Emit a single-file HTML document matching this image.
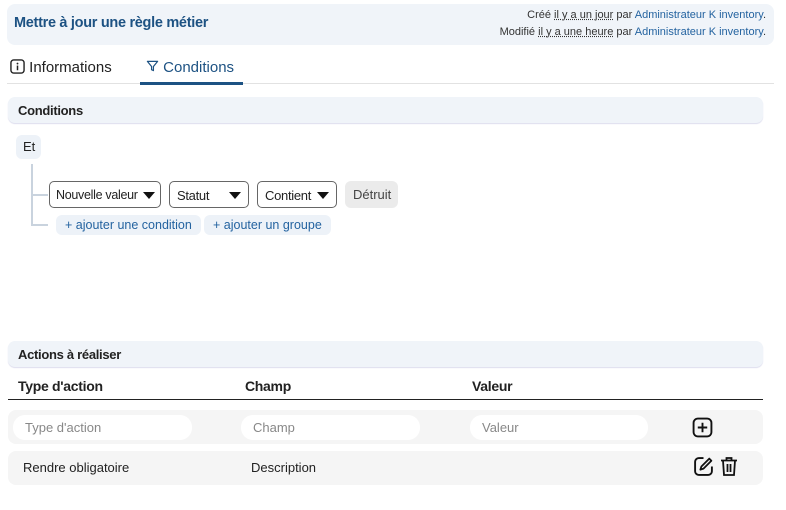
<!DOCTYPE html>
<html><head><meta charset="utf-8"><style>
*{box-sizing:border-box;margin:0;padding:0}
body{width:786px;height:510px;background:#fff;font-family:"Liberation Sans",sans-serif;color:#222;position:relative;overflow:hidden}
.a{position:absolute}
.hdr{left:7px;top:4px;width:767px;height:41px;background:#f0f4f9;border-radius:8px}
.title{left:14px;top:15px;font-size:14.5px;color:#1d5283;font-weight:600;letter-spacing:-0.3px}
.meta{right:20px;font-size:11px;color:#333;text-align:right}
.meta b{font-weight:normal;color:#2463a0}
.meta u{text-decoration:underline dotted}
.tab{top:59px;font-size:15px}
.sec{background:#f0f4f9;border-radius:7px;height:26px;box-shadow:0 1px 1px #dde}
.sec span{position:absolute;left:10px;top:6px;font-size:13px;font-weight:bold;letter-spacing:-0.3px}
.sel{top:181px;height:27px;border:1px solid #666;border-radius:5px;font-size:13px;padding:6px 7px;letter-spacing:-0.3px;white-space:nowrap}
.tri{position:absolute;right:7px;top:10px;width:0;height:0;border-left:6px solid transparent;border-right:6px solid transparent;border-top:7px solid #111}
.btn{background:#edf2f8;color:#2463a0;font-size:12.5px;border-radius:6px;height:20px;padding:3px 9px}
.th{top:378px;font-size:14px;font-weight:bold;letter-spacing:-0.3px}
.row{left:8px;width:755px;background:#f5f5f5;border-radius:8px;height:34px}
.inp{top:415px;height:25px;background:#fff;border-radius:12px;font-size:13px;color:#888;padding:5px 12px}
</style></head><body>
<div class="a hdr"></div>
<div class="a title">Mettre à jour une règle métier</div>
<div class="a meta" style="top:9px">Créé <u>il y a un jour</u> par <b>Administrateur K inventory</b>.</div>
<div class="a meta" style="top:26px">Modifié <u>il y a une heure</u> par <b>Administrateur K inventory</b>.</div>

<div class="a tab" style="left:10px">
<svg width="15" height="15" viewBox="0 0 16 16" style="vertical-align:-2px"><rect x="1" y="1" width="14" height="14" rx="3" fill="none" stroke="#222" stroke-width="1.5"/><circle cx="8" cy="4.8" r="1" fill="#222"/><path d="M8 7v5" stroke="#222" stroke-width="1.6"/></svg> Informations</div>
<div class="a tab" style="left:146px;color:#1d5283">
<svg width="13" height="14" viewBox="0 0 14 14" style="vertical-align:-1px"><path d="M1.5 2h11L8 7.5V12l-2-1V7.5z" fill="none" stroke="#1d5283" stroke-width="1.3" stroke-linejoin="round"/></svg> Conditions</div>
<div class="a" style="left:7px;top:83px;width:767px;height:1px;background:#e2e2e2"></div>
<div class="a" style="left:140px;top:82px;width:103px;height:3px;background:#1d5283"></div>

<div class="a sec" style="left:8px;top:97px;width:755px"><span>Conditions</span></div>

<div class="a" style="left:16px;top:135px;width:25px;height:24px;background:#edf2f8;border-radius:6px;font-size:13px;padding:4px 7px">Et</div>
<div class="a" style="left:31px;top:164px;width:2px;height:61px;background:#c9d3de"></div>
<div class="a" style="left:31px;top:194px;width:17px;height:2px;background:#c9d3de"></div>
<div class="a" style="left:31px;top:224px;width:17px;height:2px;background:#c9d3de"></div>

<div class="a sel" style="left:49px;width:112px;padding-left:6px;font-size:12.5px">Nouvelle valeur<i class="tri" style="right:5px"></i></div>
<div class="a sel" style="left:169px;width:80px">Statut<i class="tri"></i></div>
<div class="a sel" style="left:257px;width:80px">Contient<i class="tri"></i></div>
<div class="a" style="left:345px;top:181px;width:53px;height:27px;background:#ebebeb;border-radius:6px;font-size:13px;color:#444;padding:6px 8px">Détruit</div>
<div class="a btn" style="left:56px;top:215px">+ ajouter une condition</div>
<div class="a btn" style="left:204px;top:215px">+ ajouter un groupe</div>

<div class="a sec" style="left:8px;top:341px;width:755px"><span>Actions à réaliser</span></div>
<div class="a th" style="left:18px">Type d'action</div>
<div class="a th" style="left:245px">Champ</div>
<div class="a th" style="left:472px">Valeur</div>
<div class="a" style="left:8px;top:399px;width:755px;height:1px;background:#222"></div>

<div class="a row" style="top:410px"></div>
<div class="a inp" style="left:13px;width:179px">Type d'action</div>
<div class="a inp" style="left:241px;width:179px">Champ</div>
<div class="a inp" style="left:470px;width:178px">Valeur</div>
<svg class="a" style="left:692px;top:417px" width="21" height="21" viewBox="0 0 20 20"><rect x="1.5" y="1.5" width="17" height="17" rx="4" fill="none" stroke="#111" stroke-width="1.8"/><path d="M10 5.5v9M5.5 10h9" stroke="#111" stroke-width="1.8"/></svg>

<div class="a row" style="top:451px"></div>
<div class="a" style="left:23px;top:460px;font-size:13px">Rendre obligatoire</div>
<div class="a" style="left:251px;top:460px;font-size:13px">Description</div>
<svg class="a" style="left:693px;top:456px" width="21" height="21" viewBox="0 0 20 20"><path d="M10 2H5.5A3.5 3.5 0 0 0 2 5.5v9A3.5 3.5 0 0 0 5.5 18h9a3.5 3.5 0 0 0 3.5-3.5V10" fill="none" stroke="#111" stroke-width="1.8"/><path d="M15.5 2.5l2 2L10 12l-3 1 1-3z" fill="none" stroke="#111" stroke-width="1.7" stroke-linejoin="round"/></svg>
<svg class="a" style="left:720px;top:456px" width="18" height="21" viewBox="0 0 18 21"><path d="M1 4.5h16M6.5 4.5V2h5v2.5M3 4.5l1 14.5h10l1-14.5M7.5 8v8M10.5 8v8" fill="none" stroke="#111" stroke-width="1.8"/></svg>
</body></html>
